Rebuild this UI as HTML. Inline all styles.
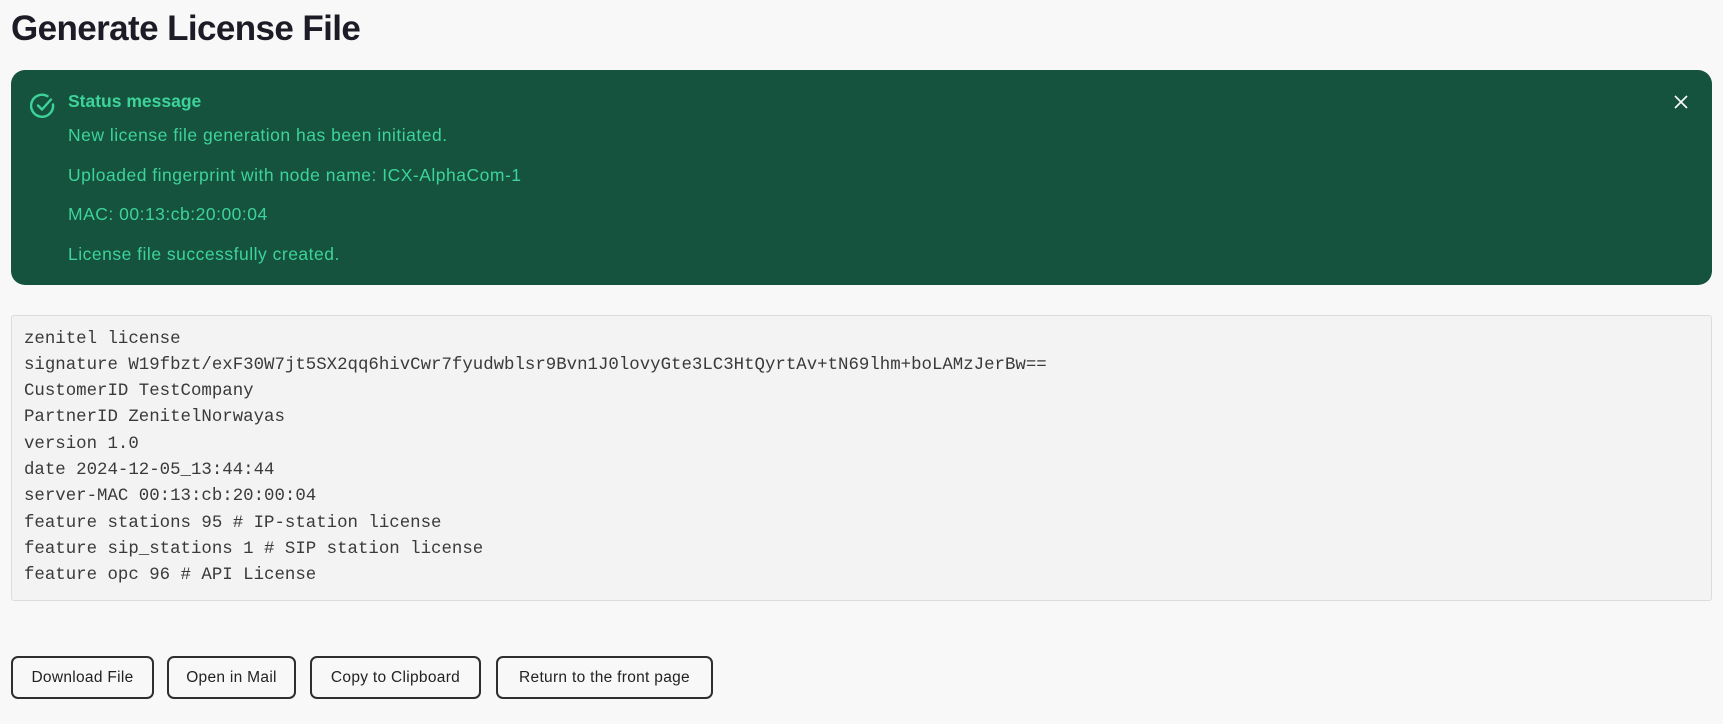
<!DOCTYPE html>
<html><head><meta charset="utf-8"><style>
*{box-sizing:border-box;margin:0;padding:0}
body{width:1723px;height:724px;background:#f8f8f8;font-family:"Liberation Sans",sans-serif;position:relative;overflow:hidden;color:#1f1f2a}
h1{position:absolute;left:11px;top:9px;font-size:35px;font-weight:600;letter-spacing:-0.6px;color:#1c1b26}
.box{position:absolute;left:11px;top:70px;width:1701px;height:215px;background:#15533f;border-radius:14px}
.box .t{position:absolute;left:57px;font-size:17.5px;color:#3dd39a;white-space:nowrap;line-height:20px;letter-spacing:0.5px}
.pre{position:absolute;left:11px;top:315px;width:1701px;height:286px;background:#f3f3f3;border:1px solid #dcdcdc;border-radius:3px}
.pre div{position:absolute;left:12px;font-family:"Liberation Mono",monospace;font-size:17.4px;color:#3a3a3a;white-space:pre;line-height:20px}
.btn{position:absolute;top:656px;height:43px;border:2px solid #2e2e2e;border-radius:7px;font-size:15.5px;color:#222;display:flex;align-items:center;justify-content:center;background:#f8f8f8;letter-spacing:0.3px}
</style></head><body>
<h1>Generate License File</h1>
<div class="box">
<svg style="position:absolute;left:19px;top:23px" width="26" height="26" viewBox="0 0 26 26" fill="none" stroke="#3dd39a" stroke-width="2.4" stroke-linecap="round" stroke-linejoin="round"><path d="M23 11.5A11 11 0 1 1 17.5 3.2"/><path d="M8 12.5l4 4 9-10"/></svg>
<div class="t" style="top:21px;font-weight:700;letter-spacing:0">Status message</div>
<div class="t" style="top:55px">New license file generation has been initiated.</div>
<div class="t" style="top:95px">Uploaded fingerprint with node name: ICX-AlphaCom-1</div>
<div class="t" style="top:134px">MAC: 00:13:cb:20:00:04</div>
<div class="t" style="top:174px">License file successfully created.</div>
<svg style="position:absolute;left:1663px;top:25px" width="14" height="14" viewBox="0 0 14 14" stroke="#fff" stroke-width="1.6"><path d="M1 1L13 13M13 1L1 13"/></svg>
</div>
<div class="pre">
<div style="top:14px">zenitel license</div>
<div style="top:40px">signature W19fbzt/exF30W7jt5SX2qq6hivCwr7fyudwblsr9Bvn1J0lovyGte3LC3HtQyrtAv+tN69lhm+boLAMzJerBw==</div>
<div style="top:66px">CustomerID TestCompany</div>
<div style="top:92px">PartnerID ZenitelNorwayas</div>
<div style="top:119px">version 1.0</div>
<div style="top:145px">date 2024-12-05_13:44:44</div>
<div style="top:171px">server-MAC 00:13:cb:20:00:04</div>
<div style="top:198px">feature stations 95 # IP-station license</div>
<div style="top:224px">feature sip_stations 1 # SIP station license</div>
<div style="top:250px">feature opc 96 # API License</div>
</div>
<div class="btn" style="left:11px;width:143px">Download File</div>
<div class="btn" style="left:167px;width:129px">Open in Mail</div>
<div class="btn" style="left:310px;width:171px">Copy to Clipboard</div>
<div class="btn" style="left:496px;width:217px">Return to the front page</div>
</body></html>
